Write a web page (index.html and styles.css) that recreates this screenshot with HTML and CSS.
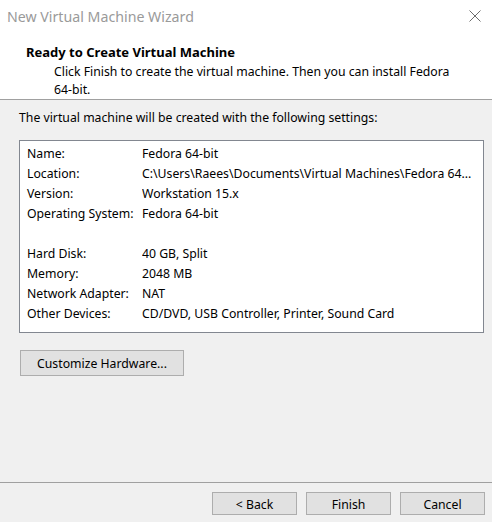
FILE: index.html
```html
<!DOCTYPE html>
<html>
<head>
<meta charset="utf-8">
<title>New Virtual Machine Wizard</title>
<link rel="stylesheet" href="styles.css">
</head>
<body>
<div class="window">
  <div class="header">
    <div class="titlebar">
      <span class="title">New Virtual Machine Wizard</span>
      <svg class="close" width="12" height="12" viewBox="0 0 12 12" aria-hidden="true">
        <path d="M0.5 0.5 L11.5 11.5 M11.5 0.5 L0.5 11.5" stroke="#6d6d6d" stroke-width="1" fill="none"/>
      </svg>
    </div>
    <div class="heading">Ready to Create Virtual Machine</div>
    <div class="subtext">Click Finish to create the virtual machine. Then you can install Fedora 64-bit.</div>
  </div>
  <div class="content">
    <div class="intro">The virtual machine will be created with the following settings:</div>
    <div class="settings">
      <div class="label">Name:</div><div class="value">Fedora 64-bit</div>
      <div class="label">Location:</div><div class="value">C:\Users\Raees\Documents\Virtual Machines\Fedora 64...</div>
      <div class="label">Version:</div><div class="value">Workstation 15.x</div>
      <div class="label">Operating System:</div><div class="value">Fedora 64-bit</div>
      <div class="label blank">&nbsp;</div><div class="value blank">&nbsp;</div>
      <div class="label">Hard Disk:</div><div class="value">40 GB, Split</div>
      <div class="label">Memory:</div><div class="value">2048 MB</div>
      <div class="label">Network Adapter:</div><div class="value">NAT</div>
      <div class="label">Other Devices:</div><div class="value">CD/DVD, USB Controller, Printer, Sound Card</div>
    </div>
    <div class="customize-row">
      <button class="btn customize">Customize Hardware...</button>
    </div>
  </div>
  <div class="footer">
    <button class="btn action">&lt; Back</button>
    <button class="btn action">Finish</button>
    <button class="btn action">Cancel</button>
  </div>
</div>
</body>
</html>
```
FILE: styles.css
```css
* { box-sizing: border-box; }

html, body {
  margin: 0;
  padding: 0;
}

body {
  width: 492px;
  height: 522px;
  overflow: hidden;
  background: #f0f0f0;
  font-family: "Noto Sans", "Open Sans", sans-serif;
  font-size: 12.25px;
  color: #000;
}

.window {
  display: flex;
  flex-direction: column;
  height: 522px;
}

.header {
  background: #ffffff;
  height: 100px;
  border-bottom: 1px solid #a0a0a0;
}

.titlebar {
  display: flex;
  align-items: center;
  justify-content: space-between;
  height: 32px;
  padding: 1px 11px 0 7px;
}

.title {
  font-size: 14.2px;
  line-height: 30px;
  padding-top: 1px;
  color: #9a9a9a;
}

.close {
  display: block;
  margin-top: -2px;
}

.heading {
  font-weight: 700;
  font-size: 13px;
  line-height: 20px;
  padding: 10px 0 0 26px;
}

.subtext {
  margin-top: 1px;
  padding-left: 54px;
  width: 470px;
  line-height: 18px;
}

.content {
  flex: 1;
  padding: 8px 9px 0 19px;
}

.intro {
  line-height: 20px;
}

.settings {
  margin-top: 12px;
  width: 465px;
  height: 193px;
  background: #ffffff;
  border: 1px solid #828790;
  padding: 3px 7px 0 7px;
  display: grid;
  grid-template-columns: 115px 1fr;
  grid-auto-rows: 20px;
  line-height: 20px;
  white-space: nowrap;
}

.value {
  overflow: hidden;
}

.customize-row {
  margin-top: 17px;
  padding-left: 1px;
}

.btn {
  font-family: inherit;
  font-size: 12.25px;
  color: #000;
  background: #e1e1e1;
  border: 1px solid #adadad;
  border-radius: 0;
  padding: 2px 0 0 0;
  margin: 0;
  line-height: 20px;
}

.customize {
  width: 164px;
  height: 26px;
}

.footer {
  height: 40px;
  border-top: 1px solid #a0a0a0;
  display: flex;
  justify-content: flex-end;
  gap: 9px;
  padding: 9px 7px 0 0;
}

.action {
  width: 85px;
  height: 23px;
}
```
